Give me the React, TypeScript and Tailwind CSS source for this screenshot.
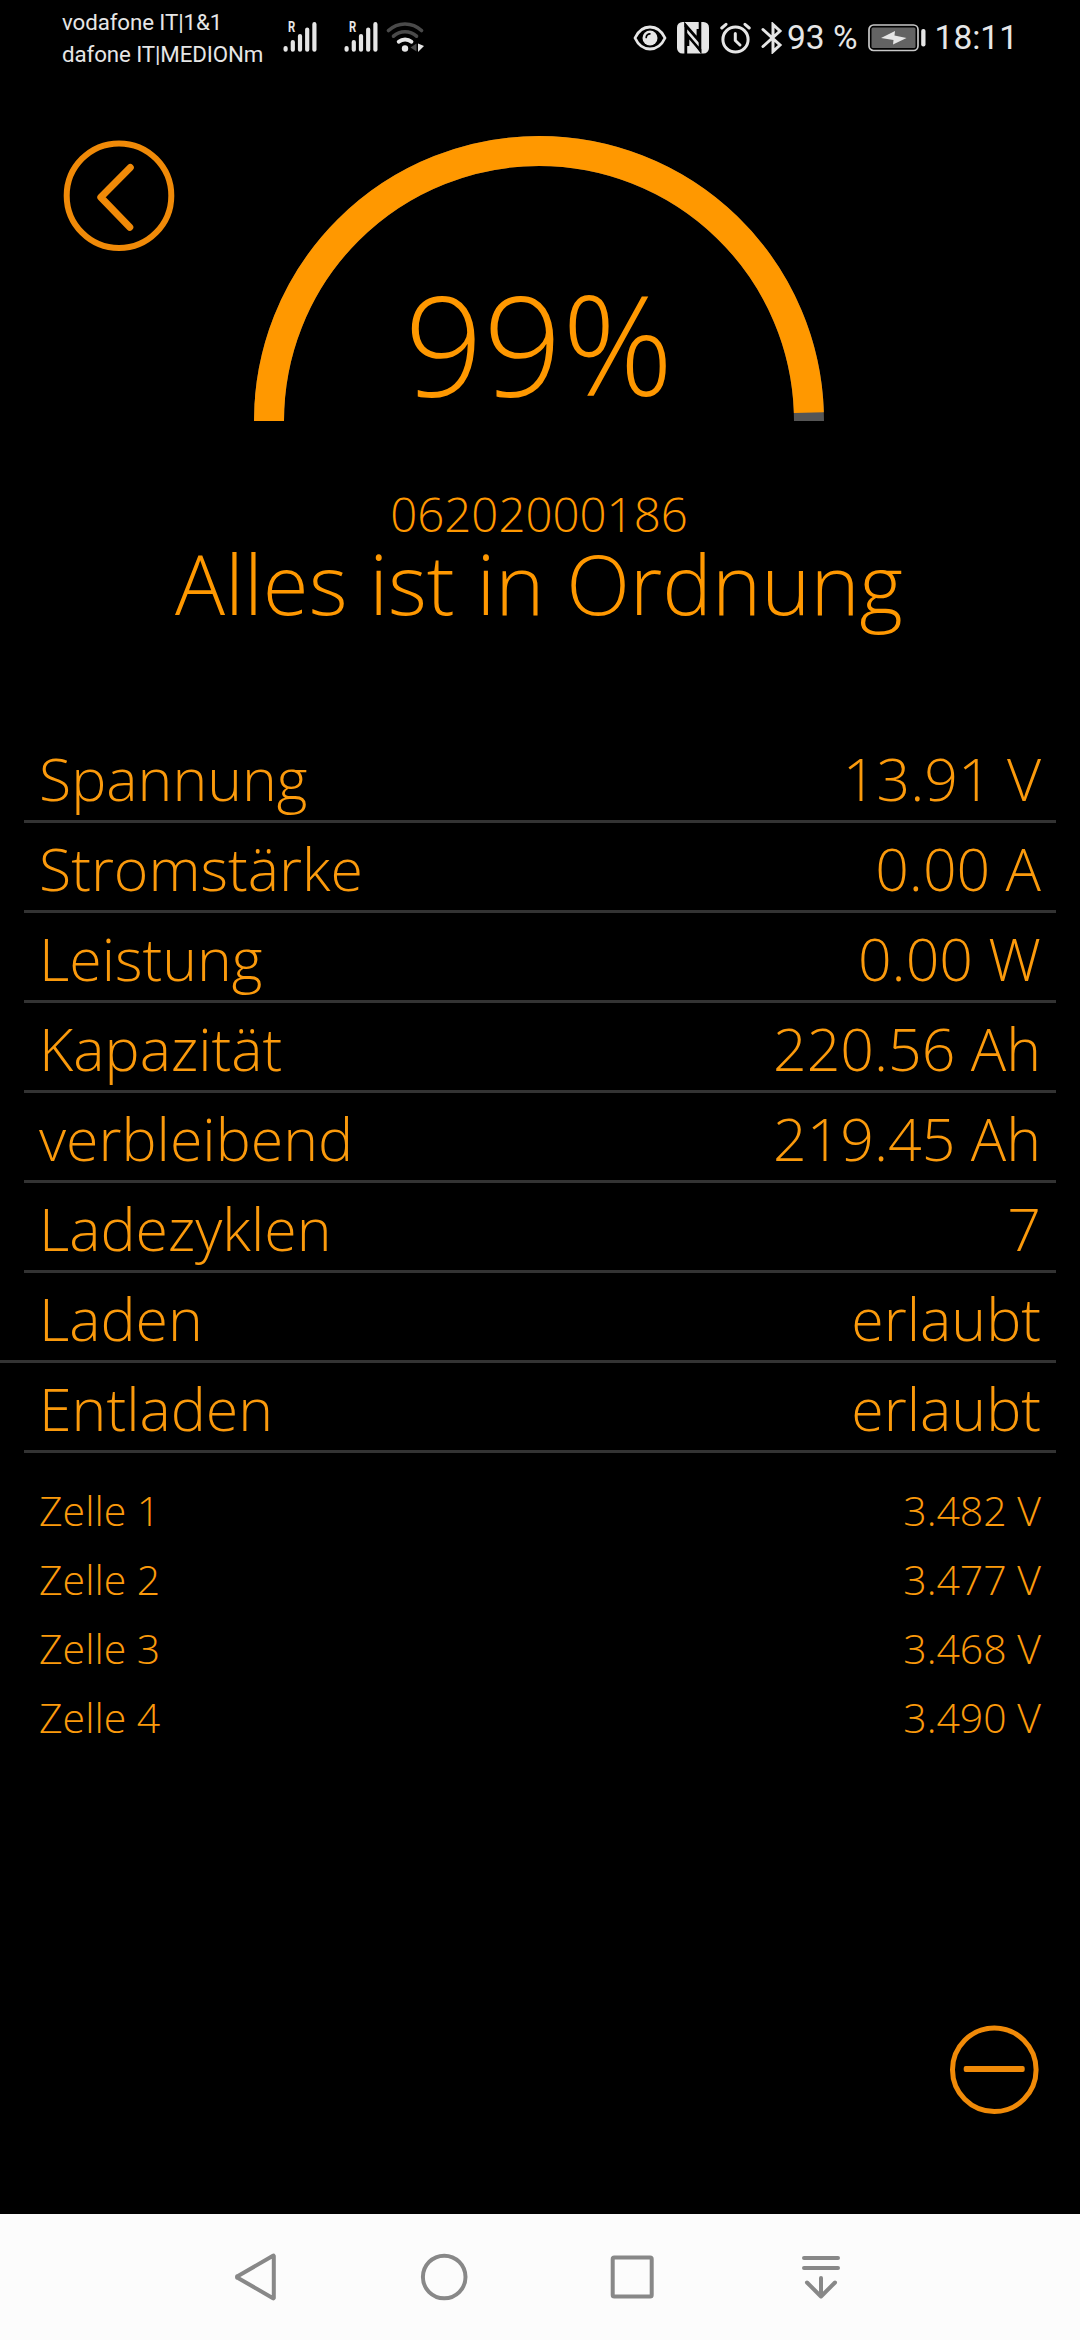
import clsx from "clsx";

const readings = [
  { label: "Spannung", value: "13.91 V" },
  { label: "Stromstärke", value: "0.00 A" },
  { label: "Leistung", value: "0.00 W" },
  { label: "Kapazität", value: "220.56 Ah" },
  { label: "verbleibend", value: "219.45 Ah" },
  { label: "Ladezyklen", value: "7" },
  { label: "Laden", value: "erlaubt", fullLine: true },
  { label: "Entladen", value: "erlaubt" },
];

const cells = [
  { label: "Zelle 1", value: "3.482 V" },
  { label: "Zelle 2", value: "3.477 V" },
  { label: "Zelle 3", value: "3.468 V" },
  { label: "Zelle 4", value: "3.490 V" },
];

function SignalIcon({ className }: { className?: string }) {
  return (
    <div className={clsx("relative h-[32px] w-[35px]", className)}>
      <span className="absolute left-[5px] top-0 font-[Roboto] text-[15px] font-bold leading-[12px] scale-x-75 origin-left">
        R
      </span>
      <svg width="35" height="32" viewBox="0 0 35 32" stroke="#e6e6e6" strokeWidth="4.2" strokeLinecap="round">
        <path d="M2.6 27v1.7M9.8 21v7.7M17 15v13.700M24.200 8.500v20.200M31.400 3.200v25.500" />
      </svg>
    </div>
  );
}

function WifiIcon() {
  return (
    <svg className="ml-[7px]" width="40" height="32" viewBox="0 0 40 32" fill="none" strokeLinecap="round">
      <path d="M2.5 9.500a24 24 0 0 1 33 0" stroke="#4a4a4a" strokeWidth="3.6" />
      <path d="M7.5 15.200a17 17 0 0 1 23 0" stroke="#4a4a4a" strokeWidth="3.6" />
      <path d="M12.7 20.800a10 10 0 0 1 12.8 0" stroke="#e6e6e6" strokeWidth="3.8" />
      <circle cx="19" cy="27.500" r="3.2" fill="#e6e6e6" />
      <path d="M30.500 22.500v8l-6-4z" fill="#4a4a4a" />
      <path d="M32 22.500v8.500l6-6z" fill="#e6e6e6" />
    </svg>
  );
}

function EyeIcon() {
  return (
    <svg width="34" height="32" viewBox="0 0 34 32" fill="none">
      <path
        d="M2 16C5.500 8.500 11 5 17 5s11.500 3.500 15 11c-3.500 7.500-9 11-15 11S5.500 23.500 2 16z"
        stroke="#e6e6e6"
        strokeWidth="2.8"
        strokeLinejoin="round"
      />
      <circle cx="17" cy="16" r="7.500" fill="#e6e6e6" />
      <path d="M13.200 15.500a3.700 3.700 0 0 1 3.700-3.700" stroke="#000" strokeWidth="1.700" strokeLinecap="round" />
    </svg>
  );
}

function NfcIcon() {
  return (
    <svg className="ml-[10px]" width="32" height="32" viewBox="0 0 32 32" fill="none">
      <rect width="32" height="31.500" rx="5.500" fill="#e6e6e6" />
      <path d="M8.800 32V3.500L21 17.500V7" stroke="#000" strokeWidth="2.800" />
      <path d="M7.400 5V0l5 7z" fill="#000" />
      <path d="M23 0v28L11 14v10" stroke="#000" strokeWidth="2.600" />
      <path d="M24.300 27v5l-5-7z" fill="#000" />
    </svg>
  );
}

function AlarmIcon() {
  return (
    <svg className="ml-[11px]" width="31" height="32" viewBox="0 0 31 32" fill="none" stroke="#e6e6e6" strokeLinecap="round">
      <circle cx="15.500" cy="17.500" r="12.600" strokeWidth="3" />
      <path d="M1.800 6L6 2.300M29.200 6L25 2.300" strokeWidth="3" />
      <path d="M15.300 11.500v7l4.700 4.500" strokeWidth="3" strokeLinejoin="round" />
    </svg>
  );
}

function BluetoothIcon() {
  return (
    <svg className="ml-[10px]" width="22" height="32" viewBox="0 0 22 32" fill="none">
      <path d="M2 7.500l17 15.500-7 6.500v-27l7 6.500L2 24.500" stroke="#e6e6e6" strokeWidth="3" strokeLinecap="round" />
    </svg>
  );
}

function BatteryIcon() {
  return (
    <svg className="ml-[10px]" width="58" height="28" viewBox="0 0 58 28">
      <rect x="1" y="1" width="49" height="25.500" rx="4.500" fill="none" stroke="#c8c8c8" strokeWidth="1.700" />
      <rect x="3.500" y="3.500" width="44" height="20.500" rx="1.500" fill="#636363" />
      <path d="M13 14l14-7-.5 4.500L38.500 14 25 20.500l.5-4.500z" fill="#e6e6e6" />
      <rect x="53.200" y="5" width="4.300" height="17.500" rx="2" fill="#e6e6e6" />
    </svg>
  );
}

function StatusBar() {
  return (
    <div className="flex h-[75px] items-start font-[Roboto,sans-serif] font-normal text-[#e6e6e6]">
      <div className="ml-[62px] mt-[6px] w-[200px] whitespace-nowrap text-[22.3px] leading-[32px] tracking-[-0.1px]">
        <p>vodafone IT|1&amp;1</p>
        <p>dafone IT|MEDIONm</p>
      </div>
      <div className="ml-[21px] mt-[21px] flex">
        <SignalIcon />
        <SignalIcon className="ml-[26px]" />
        <WifiIcon />
      </div>
      <div className="ml-auto mr-[62px] mt-[22px] flex h-[32px] items-center whitespace-nowrap text-[33.500px] leading-[36px]">
        <EyeIcon />
        <NfcIcon />
        <AlarmIcon />
        <BluetoothIcon />
        <span className="ml-[4px]">93 %</span>
        <BatteryIcon />
        <span className="ml-[9px]">18:11</span>
      </div>
    </div>
  );
}

function Gauge({ percent }: { percent: number }) {
  return (
    <div className="relative h-[285px] w-[570px]">
      <svg width="570" height="285" viewBox="0 0 570 285" fill="none" strokeWidth="30">
        <path d="M15 285a270 270 0 0 1 540 0" stroke="#555555" />
        <path
          d="M15 285a270 270 0 0 1 540 0"
          stroke="#ff9800"
          pathLength="100"
          strokeDasharray={`${percent} 100`}
        />
      </svg>
      <p className="absolute inset-x-0 top-[137px] text-center text-[138px] leading-[138px]">{percent}%</p>
    </div>
  );
}

function NavigationBar() {
  return (
    <div className="flex h-[126px] items-center bg-[#fcfcfc]">
      <svg className="ml-[234px]" width="44" height="50" viewBox="0 0 44 50" fill="none" stroke="#888888" strokeWidth="4" strokeLinejoin="round">
        <path d="M39.800 4v42a.6.6 0 0 1-.8.200L4 26a1 1 0 0 1 0-2L39 3.800a.6.6 0 0 1 .8.200z" />
      </svg>
      <svg className="ml-[142px]" width="48" height="48" viewBox="0 0 48 48" fill="none" stroke="#888888" strokeWidth="4">
        <circle cx="24.200" cy="24" r="21.300" />
      </svg>
      <svg className="ml-[142px]" width="44" height="44" viewBox="0 0 44 44" fill="none" stroke="#888888" strokeWidth="4">
        <rect x="2.700" y="2.500" width="39" height="39" rx="1.500" />
      </svg>
      <svg className="ml-[148px]" width="38" height="44" viewBox="0 0 38 44" fill="none" stroke="#888888" strokeWidth="4" strokeLinecap="round" strokeLinejoin="round">
        <path d="M2 3h34M2 13h34M19 23v18M5 27.500l14 14 14-14" />
      </svg>
    </div>
  );
}

export default function App() {
  return (
    <div className="flex h-[2340px] w-[1080px] flex-col bg-black font-['Open_Sans',sans-serif] font-light text-[#ff9800]">
      <StatusBar />

      {/* Charge level */}
      <header className="flex h-[658px] items-start pt-[61px]">
        <button className="ml-[63px] mt-[4px] w-[112px]">
          <svg width="112" height="112" viewBox="0 0 112 112" fill="none" stroke="#f08a08">
            <circle cx="56" cy="55.700" r="52.300" strokeWidth="6" />
            <path d="M67.300 27.500L37.800 57.300l29 30" strokeWidth="7" strokeLinecap="round" strokeLinejoin="round" />
          </svg>
        </button>
        <div className="-ml-[41px] flex w-[810px] flex-col items-center">
          <Gauge percent={99} />
          <p className="mt-[67px] text-[47.400px] leading-[52px]">06202000186</p>
          <h1 className="whitespace-nowrap text-[83.400px] leading-[86px]">Alles ist in Ordnung</h1>
        </div>
      </header>

      {/* Battery readings */}
      <div className="flex flex-col text-[59px] leading-[84px] text-[#fb9a0c]">
        {readings.map((item) => (
          <div
            key={item.label}
            className={clsx(
              "mr-[24px] flex justify-between border-b-[3px] border-[#333333] pr-[15px] pt-[3px]",
              item.fullLine ? "pl-[39px]" : "ml-[24px] pl-[15px]"
            )}
          >
            <span>{item.label}</span>
            <span>{item.value}</span>
          </div>
        ))}
      </div>

      {/* Cell voltages */}
      <div className="mt-[23px] flex flex-col px-[39px] text-[41px] leading-[69px] text-[#fb9a0c]">
        {cells.map((cell) => (
          <div key={cell.label} className="flex justify-between">
            <span>{cell.label}</span>
            <span>{cell.value}</span>
          </div>
        ))}
      </div>

      <button className="ml-auto mr-[41px] mt-auto mb-[99px]">
        <svg width="90" height="90" viewBox="0 0 90 90" fill="none" stroke="#f08a08">
          <circle cx="45.300" cy="44.800" r="41.800" strokeWidth="5" />
          <rect x="14.700" y="41" width="61" height="6" rx="2" fill="#f08a08" stroke="none" />
        </svg>
      </button>

      <NavigationBar />
    </div>
  );
}
